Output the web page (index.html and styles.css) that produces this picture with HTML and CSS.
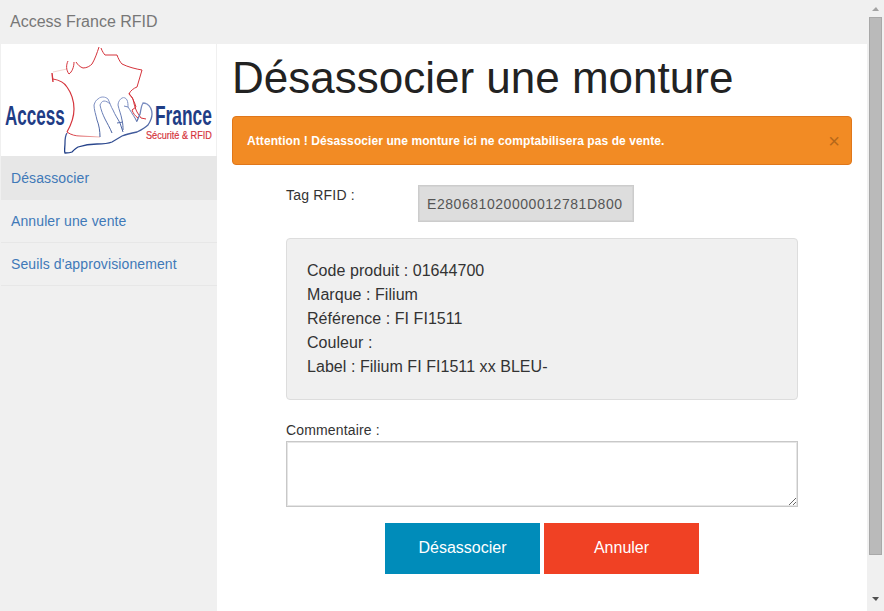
FILE: index.html
```html
<!DOCTYPE html>
<html lang="fr">
<head>
    <meta charset="UTF-8">
    <title>Access France RFID</title>
    <link rel="stylesheet" href="styles.css">
</head>
<body>
    <div class="page">
        <div class="navbar">Access France RFID</div>
        <div class="layout">
            <!-- Sidebar -->
            <div class="sidebar">
                <div class="logo">
                    <svg width="215" height="112" viewBox="1 44 215 112" fill="none">
                        <defs>
                            <linearGradient id="hand" gradientUnits="userSpaceOnUse" x1="0" y1="96" x2="0" y2="150">
                                <stop offset="0" stop-color="#8c9ccb"/>
                                <stop offset="1" stop-color="#1f3d86"/>
                            </linearGradient>
                            <linearGradient id="coast" gradientUnits="userSpaceOnUse" x1="70" y1="0" x2="102" y2="0">
                                <stop offset="0" stop-color="#d5343c"/>
                                <stop offset="1" stop-color="#f3c6c0"/>
                            </linearGradient>
                        </defs>
                        <g stroke="#d5343c" stroke-width="1">
                            <path d="M52 73l1 9" stroke-width="1.4"/>
                            <path d="M53 79c6 1 11 3 14 8 5 7 7 14 7 22 0 9-3 16-7 23" stroke-width="1.2"/>
                            <path d="M67 132c4 3 9 4 13 4l20 1" stroke="url(#coast)"/>
                            <path d="M53 72l14-3" stroke="#f3d5d0"/>
                            <path d="M68 61c-2 4-2 9 1 13 3-2 5-7 5-12"/>
                            <path d="M76 62c2 3 4 5 7 6 4 0 7-2 9-4 3-5 5-11 7-17"/>
                            <path d="M101 48c1 3 3 6 4 7l12 0c1 3 3 7 5 9 6 3 14 5 20 6l-5 17c-3 1-7 4-8 7l4 5c1 5 2 9 4 13l4 6 5 1"/>
                        </g>
                        <g stroke="url(#hand)" stroke-width="1">
                            <path d="M67 133c-2 3-2 7-2 10 0 4-1 8 0 10 3 0 5 0 7-1 2-2 4-4 6-5 6-2 13-3 19-3 5 0 10 0 15-2l10-6c5-2 10-3 15-4 4-2 8-4 11-7 2-3 4-7 4-11 0-4-2-8-5-10-2-1-3-1-4-1-2 3-2 7-3 11l-3 7" stroke-width="1.3"/>
                            <path d="M100 137c0-6-1-12-3-17-1-5-3-10-3-15 1-3 2-5 4-6 2-2 4-2 5-2 2 0 4 1 5 2 2 4 3 8 5 11 2 5 5 9 7 13l3 9"/>
                            <path d="M100 105c1-2 2-4 4-4s4 1 6 3M100 105c1 5 3 10 5 14 2 4 5 9 7 14"/>
                            <path d="M118 105c0-3 2-6 4-7 2-1 4 0 5 2 1 2 1 5 1 7 2 3 5 8 7 11l2 4"/>
                            <path d="M118 105c1 5 3 9 4 15 1 4 1 7 1 10M117 123l6-1"/>
                            <path d="M128 107l-4-1"/>
                        </g>
                        <path d="M129 93c1 2 2 3 3 4 1 3 3 6 4 10-1 1-3 2-4 3 1 3 3 6 6 8" stroke="#d5343c"/>
                        <text class="logo-access" transform="translate(5 124.5) scale(.61 1)">Access</text>
                        <text class="logo-france" transform="translate(155 124.5) scale(.62 1)">France</text>
                        <text class="logo-sub" transform="translate(146 139) scale(.83 1)">Sécurité &amp; RFID</text>
                    </svg>
                </div>
                <a class="side-link active" href="#">Désassocier</a>
                <a class="side-link" href="#">Annuler une vente</a>
                <a class="side-link" href="#">Seuils d'approvisionement</a>
            </div>

            <!-- Main content -->
            <div class="content">
                <h1>Désassocier une monture</h1>
                <div class="alert">
                    <span>Attention ! Désassocier une monture ici ne comptabilisera pas de vente.</span>
                    <span class="close">×</span>
                </div>
                <div class="form">
                    <div class="tag-row">
                        <label class="tag-label">Tag RFID :</label>
                        <input class="tag-input" type="text" value="E280681020000012781D800" disabled>
                    </div>
                    <div class="well">
                        <div>Code produit : 01644700</div>
                        <div>Marque : Filium</div>
                        <div>Référence : FI FI1511</div>
                        <div>Couleur :</div>
                        <div>Label : Filium FI FI1511 xx BLEU-</div>
                    </div>
                    <label class="comment-label">Commentaire :</label>
                    <textarea class="comment"></textarea>
                    <div class="buttons">
                        <button class="btn btn-primary">Désassocier</button>
                        <button class="btn btn-alert">Annuler</button>
                    </div>
                </div>
            </div>
        </div>
    </div>

    <!-- Scrollbar -->
    <div class="scrollbar">
        <div class="arrow arrow-up"></div>
        <div class="thumb"></div>
        <div class="arrow arrow-down"></div>
    </div>
</body>
</html>
```

FILE: styles.css
```css
/* Base */
* {
    box-sizing: border-box;
    margin: 0;
    padding: 0;
}

html, body {
    height: 100%;
    overflow: hidden;
}

body {
    display: flex;
    font-family: "Liberation Sans", Arial, sans-serif;
    font-size: 14px;
    line-height: 20px;
    color: #333;
    background: #fff;
}

.page {
    flex: 1;
    min-width: 0;
    display: flex;
    flex-direction: column;
}

/* Navbar */
.navbar {
    height: 44px;
    flex: none;
    padding: 12px 10px;
    font-size: 16px;
    color: #777;
    background: #f0f0f0;
}

.layout {
    flex: 1;
    display: flex;
}

/* Sidebar */
.sidebar {
    width: 217px;
    flex: none;
    padding-left: 1px;
    background: #f0f0f0;
}

.logo {
    width: 215px;
    height: 112px;
    background: #fff;
}

.logo svg {
    display: block;
}

.logo-access, .logo-france {
    font-size: 28px;
    font-weight: bold;
    fill: #1f3d86;
}

.logo-sub {
    font-size: 11px;
    fill: #d5343c;
    stroke: #d5343c;
    stroke-width: 0.2px;
}

.side-link {
    display: block;
    height: 43px;
    padding: 11px 10px;
    color: #3f79b8;
    letter-spacing: 0.11px;
    text-decoration: none;
    border-bottom: 1px solid #e7e7e7;
}

.side-link.active {
    height: 44px;
    padding-top: 12px;
    background: #e7e7e7;
    border-bottom: 0;
}

/* Main content */
.content {
    flex: 1;
    min-width: 0;
    padding: 0 15px;
}

h1 {
    margin-top: 9px;
    font-size: 44px;
    font-weight: 500;
    line-height: 50px;
    color: #222;
}

.alert {
    display: flex;
    justify-content: space-between;
    align-items: center;
    height: 49px;
    margin-top: 13px;
    padding: 0 11px 0 14px;
    font-size: 12px;
    font-weight: bold;
    letter-spacing: 0.085px;
    color: #fff;
    background: #f28b24;
    border: 1px solid #e0771a;
    border-radius: 4px;
}

.close {
    font-size: 20px;
    font-weight: normal;
    color: #000;
    opacity: 0.25;
}

.form {
    width: 512px;
    margin: 20px auto 0;
}

.tag-row {
    display: flex;
    align-items: flex-start;
}

.tag-label {
    width: 132px;
    letter-spacing: 0.2px;
}

.tag-input {
    width: 216px;
    height: 37px;
    padding: 0 8px;
    font: 14px "Liberation Sans", Arial, sans-serif;
    letter-spacing: 0.55px;
    color: #555;
    background: #ddd;
    border: 1px solid #ccc;
    box-shadow: inset 0 0 0 1px #d4d4d4;
    opacity: 1;
}

.well {
    height: 162px;
    margin-top: 16px;
    padding: 20px;
    font-size: 16px;
    line-height: 24px;
    letter-spacing: 0.05px;
    background: #f0f0f0;
    border: 1px solid #ddd;
    border-radius: 4px;
}

.comment-label {
    display: block;
    margin-top: 20px;
    letter-spacing: 0.15px;
}

.comment {
    display: block;
    width: 100%;
    height: 66px;
    margin-top: 1px;
    background: #fff;
    border: 1px solid #c8c8c8;
    box-shadow: inset 0 0 0 1px #e6e6e6;
}

.buttons {
    display: flex;
    justify-content: center;
    gap: 4px;
    margin-top: 16px;
}

.btn {
    width: 155px;
    height: 51px;
    padding-bottom: 2px;
    font: 16px "Liberation Sans", Arial, sans-serif;
    color: #fff;
    border: 0;
}

.btn-primary {
    background: #008cba;
}

.btn-alert {
    background: #f04124;
}

/* Scrollbar */
.scrollbar {
    width: 17px;
    flex: none;
    display: flex;
    flex-direction: column;
    align-items: center;
    background: #f0f0f0;
}

.arrow {
    width: 0;
    height: 0;
    flex: none;
    border-left: 4px solid transparent;
    border-right: 3px solid transparent;
}

.arrow-up {
    margin: 7px 0 6px;
    border-bottom: 4px solid #a3a3a3;
}

.thumb {
    width: 13px;
    height: 538px;
    flex: none;
    background: #bababa;
    border: 1px solid #a8a8a8;
}

.arrow-down {
    margin-top: 42px;
    border-top: 4px solid #505050;
}
```
